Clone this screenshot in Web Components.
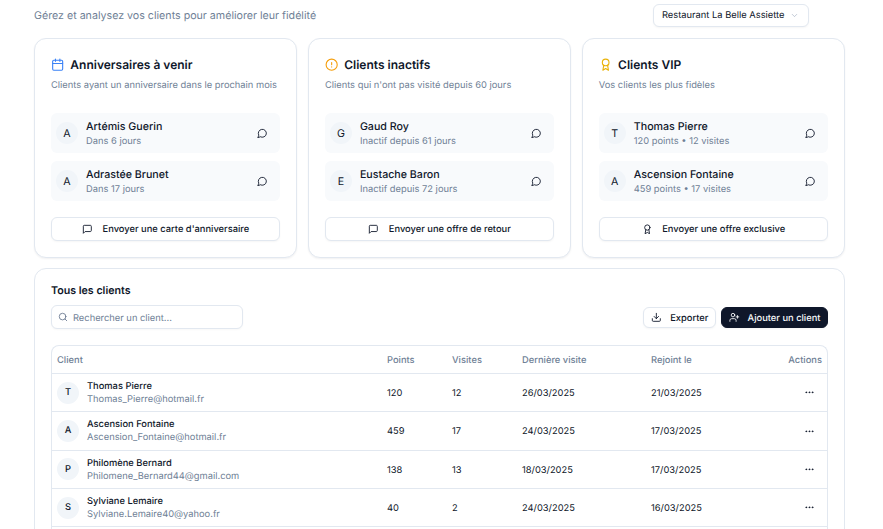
<!DOCTYPE html>
<html lang="fr"><head><meta charset="utf-8"><title>Clients</title>
<style>
html,body{margin:0;padding:0;height:529px;overflow:hidden;background:#fff}
body{font-family:Inter,"Liberation Sans",sans-serif;color:#0f172a;text-rendering:geometricPrecision}
</style></head><body>
<crm-page></crm-page>
<script>
const I={
cal:'<rect x="3" y="4" width="18" height="18" rx="2"/><path d="M16 2v4M8 2v4M3 10h18"/>',
alert:'<circle cx="12" cy="12" r="10"/><path d="M12 8v4M12 16h.01"/>',
award:'<circle cx="12" cy="8" r="6"/><path d="M15.477 12.89 17 22l-5-3-5 3 1.523-9.11"/>',
round:'<path d="M7.9 20A9 9 0 1 0 4 16.1L2 22Z"/>',
square:'<path d="M21 15a2 2 0 0 1-2 2H7l-4 4V5a2 2 0 0 1 2-2h14a2 2 0 0 1 2 2z"/>',
search:'<circle cx="11" cy="11" r="8"/><path d="m21 21-4.3-4.3"/>',
dl:'<path d="M21 15v4a2 2 0 0 1-2 2H5a2 2 0 0 1-2-2v-4"/><path d="m7 10 5 5 5-5M12 15V3"/>',
add:'<path d="M16 21v-2a4 4 0 0 0-4-4H6a4 4 0 0 0-4 4v2"/><circle cx="9" cy="7" r="4"/><path d="M19 8v6M22 11h-6"/>',
chev:'<path d="m6 9 6 6 6-6"/>',
dots:'<circle cx="12" cy="12" r="1"/><circle cx="19" cy="12" r="1"/><circle cx="5" cy="12" r="1"/>'
};
const svg=(n,s,c='currentColor',w=2)=>`<svg xmlns="http://www.w3.org/2000/svg" width="${s}" height="${s}" viewBox="0 0 24 24" fill="none" stroke="${c}" stroke-width="${w}" stroke-linecap="round" stroke-linejoin="round" style="display:block;flex:none">${I[n]}</svg>`;
function def(name,fn){customElements.define(name,class extends HTMLElement{connectedCallback(){if(this.shadowRoot)return;this.attachShadow({mode:'open'}).innerHTML=fn(this)}})}
const a=(e,k)=>e.getAttribute(k)||'';
const MUTED='#6f7f96';

def('crm-avatar',e=>`<style>:host{display:flex;flex:none;width:${a(e,'size')||22}px;height:${a(e,'size')||22}px;border-radius:50%;background:#f1f5f9;align-items:center;justify-content:center;font-size:${a(e,'fs')||10.67}px;font-weight:${a(e,'fw')||400};color:#0f172a}</style><slot></slot>`);

def('crm-button',e=>`<style>:host{display:flex;align-items:center;justify-content:center;box-sizing:border-box;height:${a(e,'h')||25}px;gap:${a(e,'gap')||10}px;padding:0 ${a(e,'px')||7}px;border-radius:6px;font-size:9.33px;font-weight:500;line-height:1;white-space:nowrap;border:1px solid ${e.hasAttribute('primary')?'#0f172a':'#e2e8f0'};background:${e.hasAttribute('primary')?'#0f172a':'#fff'};color:${e.hasAttribute('primary')?'#f8fafc':'#0f172a'};box-shadow:0 1px 2px rgba(0,0,0,.04)}span{padding-top:2px}</style>${svg(a(e,'icon'),10.67)}<span><slot></slot></span>`);

def('crm-person',e=>`<style>
:host{display:flex;align-items:center;height:40px;box-sizing:border-box;background:#f8fafc;border-radius:6px;padding:0 12.5px 0 5px}
.t{flex:1;margin-left:8px;min-width:0;padding-top:2px}
.n{font-size:10.67px;font-weight:500;line-height:14px;color:#0f172a}
.s{font-size:9.33px;line-height:12px;margin-top:2px;color:${MUTED}}
</style><crm-avatar size="22">${a(e,'name')[0]}</crm-avatar><div class="t"><div class="n">${a(e,'name')}</div><div class="s">${a(e,'sub')}</div></div>${svg('round',10.67)}`);

def('crm-card',e=>`<style>
:host{display:flex;flex-direction:column;box-sizing:border-box;height:220px;background:#fff;border:1px solid #e2e8f0;border-radius:12px;padding:17px 16px 16px;box-shadow:0 1px 2px rgba(15,23,42,.06)}
h3{margin:0;display:flex;align-items:center;gap:6px;font-size:12px;font-weight:600;line-height:18px;height:18px;color:#0f172a}
p{margin:5px 0 0;font-size:9.33px;line-height:14px;color:${MUTED}}
.list{display:flex;flex-direction:column;gap:8px;margin-top:20px}
crm-button{margin-top:16px}
</style><h3>${svg(a(e,'icon'),13.33,a(e,'color'))}<span>${a(e,'title')}</span></h3><p>${a(e,'desc')}</p><div class="list"><slot></slot></div><crm-button icon="${a(e,'bicon')}" h="25">${a(e,'action')}</crm-button>`);

def('crm-select',e=>`<style>:host{display:flex;align-items:center;box-sizing:border-box;width:156px;height:23px;padding:0 9px 0 8px;border:1px solid #e2e8f0;border-radius:6px;background:#fff;font-size:9.33px;font-weight:400;color:#0f172a;white-space:nowrap;justify-content:space-between;box-shadow:0 1px 2px rgba(0,0,0,.04)}</style><slot></slot>${svg('chev',9,'#94a3b8',1.5)}`);

def('crm-search',e=>`<style>:host{display:flex;align-items:center;gap:5px;box-sizing:border-box;width:192px;height:24px;padding:0 6px;border:1px solid #e2e8f0;border-radius:6px;background:#fff;font-size:9.33px;color:${MUTED};box-shadow:0 1px 2px rgba(0,0,0,.03)}span{padding-top:2px}</style>${svg('search',10,'#64748b')}<span><slot></slot></span>`);

def('crm-table',e=>{
const rows=[["Thomas Pierre","Thomas_Pierre@hotmail.fr","120","12","26/03/2025","21/03/2025"],
["Ascension Fontaine","Ascension_Fontaine@hotmail.fr","459","17","24/03/2025","17/03/2025"],
["Philomène Bernard","Philomene_Bernard44@gmail.com","138","13","18/03/2025","17/03/2025"],
["Sylviane Lemaire","Sylviane.Lemaire40@yahoo.fr","40","2","24/03/2025","16/03/2025"]];
return `<style>
:host{display:block;border:1px solid #e2e8f0;border-radius:8px 8px 0 0;border-bottom:0;overflow:hidden}
.r{display:grid;grid-template-columns:330px 65px 70px 129px 1fr 60px;align-items:center;padding:0 5px;box-sizing:border-box;height:38.33px;border-bottom:1px solid #e2e8f0;font-size:9.33px;color:#0f172a}
.r>span{padding-top:2px}
.r>span.dots{padding-top:0}
.h{height:28px;color:${MUTED};font-weight:500}
.c{display:flex;align-items:center;gap:8px}
.tx{padding-top:1px}
.n{font-weight:500;line-height:13px}
.m{color:${MUTED};line-height:13px}
.act{justify-self:end}
.dots{justify-self:end;margin-right:7.5px}
</style><div class="r h"><span>Client</span><span>Points</span><span>Visites</span><span>Dernière visite</span><span>Rejoint le</span><span class="act">Actions</span></div>`+rows.map(r=>`<div class="r"><div class="c"><crm-avatar size="22" fs="9.33" fw="500">${r[0][0]}</crm-avatar><div class="tx"><div class="n">${r[0]}</div><div class="m">${r[1]}</div></div></div><span>${r[2]}</span><span>${r[3]}</span><span>${r[4]}</span><span>${r[5]}</span><span class="dots">${svg('dots',10.67)}</span></div>`).join('')+`<div class="r"></div>`});

def('crm-page',e=>`<style>
:host{display:block;padding:0 38px 0 34px;box-sizing:border-box;width:883px;height:529px;overflow:hidden}
.top{display:flex;justify-content:space-between;align-items:center;height:30px;padding:0 36px 0 0;box-sizing:border-box}
.sub{font-size:10.67px;color:${MUTED}}
.cards{display:grid;grid-template-columns:repeat(3,1fr);gap:10.67px;margin-top:8px}
.all{margin-top:10px;box-sizing:border-box;height:300px;border:1px solid #e2e8f0;border-radius:12px;padding:16px 16px 0}
h2{margin:0;font-size:10.67px;font-weight:600;line-height:12px;color:#0f172a}
.tools{display:flex;align-items:center;justify-content:space-between;margin-top:8px}
.btns{display:flex;gap:5px;padding-top:1px}
crm-table{margin-top:16px}
</style>
<div class="top"><span class="sub">Gérez et analysez vos clients pour améliorer leur fidélité</span><crm-select>Restaurant La Belle Assiette</crm-select></div>
<div class="cards">
<crm-card icon="cal" color="#3b82f6" title="Anniversaires à venir" desc="Clients ayant un anniversaire dans le prochain mois" bicon="square" action="Envoyer une carte d'anniversaire">
<crm-person name="Artémis Guerin" sub="Dans 6 jours"></crm-person><crm-person name="Adrastée Brunet" sub="Dans 17 jours"></crm-person></crm-card>
<crm-card icon="alert" color="#f59e0b" title="Clients inactifs" desc="Clients qui n'ont pas visité depuis 60 jours" bicon="square" action="Envoyer une offre de retour">
<crm-person name="Gaud Roy" sub="Inactif depuis 61 jours"></crm-person><crm-person name="Eustache Baron" sub="Inactif depuis 72 jours"></crm-person></crm-card>
<crm-card icon="award" color="#eab308" title="Clients VIP" desc="Vos clients les plus fidèles" bicon="award" action="Envoyer une offre exclusive">
<crm-person name="Thomas Pierre" sub="120 points • 12 visites"></crm-person><crm-person name="Ascension Fontaine" sub="459 points • 17 visites"></crm-person></crm-card>
</div>
<div class="all"><h2>Tous les clients</h2>
<div class="tools"><crm-search>Rechercher un client...</crm-search><div class="btns"><crm-button icon="dl" h="21" px="7" gap="9">Exporter</crm-button><crm-button icon="add" primary h="21" px="6.5" gap="8">Ajouter un client</crm-button></div></div>
<crm-table></crm-table></div>
`);
</script></body></html>
